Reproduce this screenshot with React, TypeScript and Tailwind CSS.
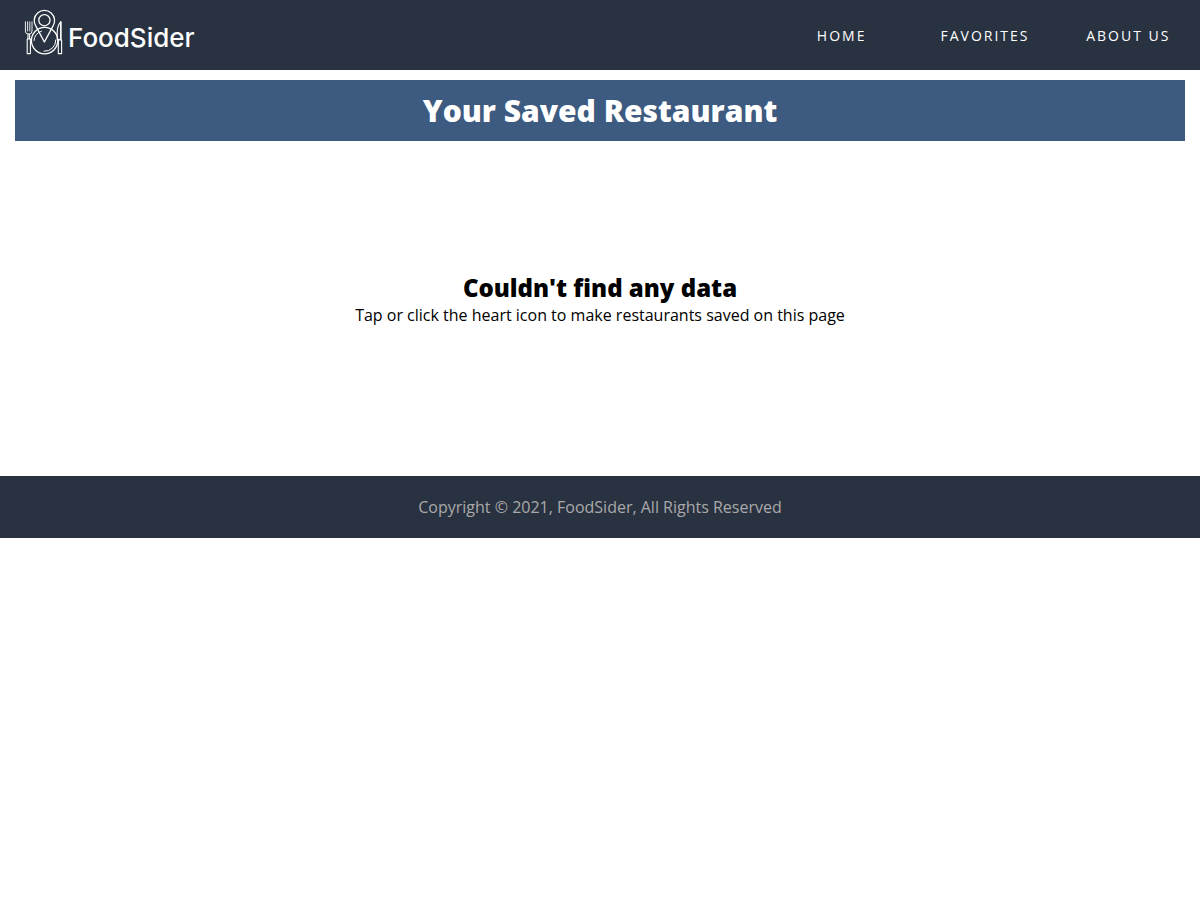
const links = [
  { label: 'Home', href: '#home' },
  { label: 'Favorites', href: '#favorites' },
  { label: 'About Us', href: '#about' },
];

function LogoMark() {
  return (
    <svg
      className="h-12 w-10 shrink-0"
      viewBox="0 0 40 48"
      fill="none"
      stroke="white"
      strokeWidth="1.3"
      strokeLinecap="round"
      strokeLinejoin="round"
      aria-hidden="true"
    >
      <path d="M12 17.4A10.2 10.2 0 1 1 28.8 17.4L20.4 33Z" />
      <circle cx="20.4" cy="11.2" r="5.6" />
      <circle cx="20.6" cy="31.6" r="13.2" />
      <path d="M10 31.5A10.6 10.6 0 0 1 17.5 22.2M31.8 31A10.8 10.8 0 0 1 20 42.2" strokeWidth="1" />
      <path d="M1.4 12.8V22Q1.4 25 4 25H5.4Q8 25 8 22V12.8M3.6 12.8V22M5.8 12.8V22" strokeWidth="0.9" />
      <path d="M4 25V29.5M5.6 25V29.5M3.2 30H6.4V44.6H3.2Z" strokeWidth="1.1" />
      <path d="M36.8 12.6Q33 17 33.2 24.5V30.5H36.8ZM34.3 31H37.6V44.6H34.3Z" strokeWidth="1.1" />
      <path d="M36.8 13V30.5" strokeWidth="1.4" />
    </svg>
  );
}

export default function App() {
  return (
    <div className="bg-white font-['Open_Sans',sans-serif] text-base text-black">
      <header className="flex h-[70px] items-center justify-between bg-[#293241]">
        <a href="#home" className="flex items-center gap-1 pl-6 text-white" aria-label="FoodSider">
          <div className="pb-1">
            <LogoMark />
          </div>
          <span className="pt-[6px] font-['Inter',sans-serif] text-[26px] leading-8 font-medium">FoodSider</span>
        </a>
        <nav aria-label="Main">
          <ul className="grid w-[430px] grid-cols-3 text-center">
            {links.map((link) => (
              <li key={link.label}>
                <a href={link.href} className="text-sm tracking-[2px] text-white uppercase">
                  {link.label}
                </a>
              </li>
            ))}
          </ul>
        </nav>
      </header>
      <main className="px-[15px] pt-[10px] text-center">
        <h1 className="bg-[#3d5a80] p-[10px] text-[30px] leading-[41px] font-extrabold text-white">
          Your Saved Restaurant
        </h1>
        <section className="pt-[130px] pb-[150px]">
          <h2 className="text-2xl leading-[33px] font-extrabold">Couldn't find any data</h2>
          <p className="leading-[22px]">Tap or click the heart icon to make restaurants saved on this page</p>
        </section>
      </main>
      <footer className="bg-[#293241] p-5 text-center">
        <p className="leading-[22px] text-[#a9a9a9]">Copyright © 2021, FoodSider, All Rights Reserved</p>
      </footer>
    </div>
  );
}
